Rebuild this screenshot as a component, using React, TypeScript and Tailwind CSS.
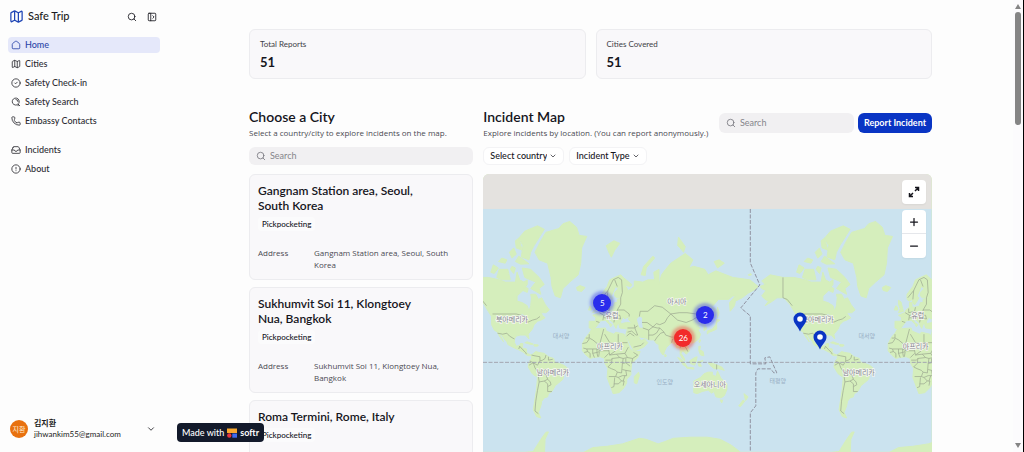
import type { ReactNode } from 'react';
import { ChevronDown, CircleAlert, CircleCheck, Inbox, Map, Minus, PanelLeftOpen, Phone, Plus, Search } from 'lucide-react';

type Point = [number, number];

const TILE = 306;

// Web mercator, with the equator at y = 188 and Greenwich at x = 114
function project([lon, lat]: Point) {
  const x = 114 + (lon * TILE) / 360;
  const y = 188 - (TILE / (2 * Math.PI)) * Math.log(Math.tan(Math.PI / 4 + (lat * Math.PI) / 360));
  return `${x.toFixed(1)} ${y.toFixed(1)}`;
}

const toPath = (points: Point[]) => 'M' + points.map(project).join('L');
const toArea = (points: Point[]) => toPath(points) + 'Z';

const land: Point[][] = [
  // North and Central America
  [[-168, 66], [-162, 67], [-166, 68.5], [-156, 71], [-141, 70], [-128, 70], [-115, 69], [-108, 68], [-96, 68], [-94, 72], [-91, 69], [-86, 68], [-82, 69], [-82, 67], [-87, 64], [-94, 61], [-94, 58], [-88, 57], [-82, 55], [-80, 51], [-78, 55], [-77, 60], [-78, 62], [-72, 62], [-69, 59], [-65, 60], [-61, 56], [-56, 52], [-60, 50], [-66, 50], [-64, 48], [-61, 46], [-66, 44], [-70, 43], [-74, 40], [-76, 36], [-81, 31], [-80, 26], [-82, 28], [-84, 30], [-90, 30], [-95, 29], [-97, 26], [-97, 22], [-95, 18], [-91, 19], [-90, 21], [-87, 21], [-88, 16], [-83, 15], [-83, 11], [-80, 9], [-77, 8], [-80, 7], [-83, 8], [-86, 11], [-92, 14], [-97, 16], [-105, 20], [-106, 23], [-109, 26], [-113, 31], [-115, 31], [-112, 27], [-110, 23], [-115, 29], [-117, 33], [-121, 35], [-124, 40], [-124, 47], [-128, 51], [-133, 56], [-140, 60], [-148, 60], [-153, 58], [-162, 55], [-158, 58], [-162, 59], [-166, 61], [-161, 64], [-166, 65]],
  // South America
  [[-77, 8], [-72, 12], [-68, 11], [-62, 10], [-57, 6], [-51, 4], [-50, 0], [-44, -2], [-39, -4], [-35, -7], [-39, -14], [-40, -20], [-45, -24], [-49, -27], [-53, -33], [-57, -35], [-58, -38], [-62, -39], [-65, -42], [-66, -46], [-69, -51], [-66, -55], [-71, -54], [-75, -49], [-73, -40], [-71, -30], [-70, -18], [-76, -14], [-81, -6], [-80, -1], [-77, 4]],
  // Greenland and the Arctic islands
  [[-73, 78], [-66, 80.5], [-60, 82], [-45, 82.6], [-40, 83.3], [-32, 83.6], [-24, 82.8], [-21, 81.5], [-12, 81.3], [-18, 79], [-19, 75], [-22, 71], [-32, 68], [-40, 65], [-43, 60], [-49, 61], [-53, 66], [-54, 70], [-58, 75], [-68, 76]],
  [[-62, 82.5], [-70, 83], [-85, 82.2], [-92, 81], [-87, 79.5], [-89, 76.8], [-80, 76], [-78, 78], [-74, 79.5]],
  [[-62, 67], [-68, 70], [-78, 73], [-88, 73.5], [-85, 70], [-72, 68], [-78, 65], [-66, 62], [-68, 65]],
  [[-118, 70], [-115, 73], [-105, 73], [-102, 69], [-112, 69]],
  [[-125, 72], [-122, 74.5], [-116, 73.5], [-121, 71.5]],
  [[-80, 74.8], [-92, 77], [-96, 75.5], [-90, 74.7]],
  [[-116, 75.5], [-112, 76.5], [-106, 76], [-108, 75]],
  [[-103, 78], [-98, 79], [-95, 77.5], [-100, 76.5]],
  [[-96, 80.5], [-92, 81], [-88, 78.5], [-95, 79]],
  [[-100, 74], [-96, 73.5], [-98, 71.5], [-102, 73]],
  [[-86, 66], [-81, 65], [-82, 63], [-87, 64]],
  [[-24, 65.5], [-20, 66.4], [-14, 65.5], [-18, 63.5], [-23, 64]],
  [[11, 79.5], [20, 80.5], [27, 80], [21, 78.5], [17, 76.7], [14, 78]],
  [[52, 71], [55, 74], [66, 77], [68, 76.5], [58, 73.5], [57, 70.8]],
  [[95, 79.5], [96, 81.2], [104, 79.3], [102, 78], [98, 79]],
  [[138, 75.5], [144, 76], [150, 75], [142, 73.5]],
  [[178, 71], [181, 71.5], [182, 71], [179, 70.7]],
  // British Isles
  [[-5, 50], [-3, 53], [-5, 56], [-5, 58.5], [-2, 57.5], [0, 53], [1, 51]],
  [[-10, 52], [-8, 55], [-6, 54], [-6, 52]],
  // Caribbean
  [[-85, 22], [-82, 23], [-75, 20.5], [-78, 20]],
  [[-74, 20], [-69, 19.5], [-70, 18], [-74, 18.3]],
  // Europe and Asia
  [[-9, 37], [-9, 43], [-2, 43], [-1, 46], [-5, 48], [2, 50], [4, 52], [8, 54], [8, 57], [11, 57], [11, 54], [14, 54], [19, 54.5], [21, 57], [24, 57], [24, 59], [30, 60], [23, 60], [21, 61], [21, 63], [25, 65], [22, 66], [17, 61], [19, 60], [16, 57], [14, 55.5], [12, 57], [11, 59], [8, 58], [5, 59], [5, 62], [12, 66], [15, 69], [21, 70], [28, 71], [31, 70], [41, 67], [40, 66], [33, 66.5], [37, 64], [41, 65], [44, 66], [44, 68.5], [54, 68], [60, 69], [68, 69], [67, 72], [73, 73], [73, 67], [76, 71], [81, 73], [87, 75], [104, 77.7], [113, 76], [108, 73.5], [114, 74], [127, 73], [131, 71], [140, 72.5], [152, 71], [160, 70], [170, 69.5], [180, 69], [190, 66], [186, 64.5], [178, 62.5], [171, 60], [163, 58], [162, 55], [157, 51], [156, 57], [163, 61], [160, 61], [155, 59], [143, 59], [136, 54.5], [141, 52], [140, 48], [135, 43.5], [131, 43], [128, 40], [129, 36], [126, 34.5], [126, 38], [122, 39.5], [118, 39], [122, 37], [119, 35], [122, 31], [120, 26], [114, 22], [108, 21.5], [106, 19], [109, 13], [107, 10.5], [105, 9], [103, 11], [101, 13], [99, 10], [103, 4], [103.5, 1.5], [101, 3], [98, 9], [98, 14], [97, 17], [94, 16], [92, 21], [88, 22], [82, 17], [80, 13], [78, 8], [76, 10], [73, 16], [73, 20], [70, 21], [67, 25], [61, 25], [57, 27], [51, 28], [48, 30], [50, 27], [52, 24], [56, 26], [60, 22], [55, 17], [45, 13], [43, 13], [39, 21], [35, 28], [34, 31], [36, 36], [31, 36.5], [27, 37], [26, 40], [29, 41], [35, 42], [41, 41.5], [37, 45], [39, 47], [35, 46], [33, 45], [31, 46.5], [28, 43], [28, 41], [24, 40.5], [23, 38], [22.5, 36.5], [20, 40], [19, 42], [14, 45], [12.5, 45], [14, 42], [18, 40], [16, 38], [15, 40], [10, 44], [4, 43.5], [3, 42], [0, 39], [-2, 37], [-5, 36]],
  // Africa and Madagascar
  [[-6, 36], [10, 37], [11, 34], [20, 31], [22, 33], [32, 31], [34, 28], [37, 21], [39, 15], [43, 12], [51, 12], [48, 5], [41, -2], [40, -10], [40, -15], [35, -20], [35, -24], [32, -29], [26, -34], [19, -35], [17, -30], [12, -18], [13, -8], [9, -1], [9, 4], [4, 6], [-4, 5], [-8, 4], [-13, 8], [-17, 13], [-17, 21], [-13, 28], [-9, 32]],
  [[44, -17], [49, -12], [50, -16], [47, -25], [44, -24]],
  // Sri Lanka, Japan, Taiwan, Philippines
  [[80, 9], [82, 7], [80, 6]],
  [[130, 31], [130, 34], [136, 36], [140, 40], [141, 45], [145, 44], [141, 42], [141, 36], [136, 34], [132, 33]],
  [[142, 46], [142, 54], [144, 50]],
  [[120, 23], [121, 25], [122, 25], [121, 22]],
  [[120, 18], [122, 18], [121, 14], [125, 12], [126, 7], [122, 8], [120, 13]],
  // Indonesia and New Guinea
  [[95, 5], [98, 4], [104, -2], [106, -6], [102, -4]],
  [[105, -6], [114, -7], [114, -8.5], [106, -7.5]],
  [[109, 1], [115, 5], [118, 6], [117, 1], [115, -4], [110, -2]],
  [[119, 0], [125, 1.5], [121, -1], [123, -5], [120, -5]],
  [[131, -1], [137, -2], [147, -6], [150, -10], [143, -8], [138, -8], [133, -4]],
  // Australia and New Zealand
  [[114, -22], [114, -34], [118, -35], [124, -33], [131, -31.5], [135, -34.5], [138, -33], [140, -38], [146, -39], [150, -37], [153, -31], [153, -25], [146, -19], [142, -11], [140, -17], [136, -15], [136, -12], [131, -12], [126, -14], [122, -18]],
  [[145, -41], [148, -41], [147, -43.5]],
  [[173, -35], [178, -38], [175, -41.5], [174, -38]],
  [[172, -41], [174, -42], [169, -46.5], [167, -46]],
  // Antarctica
  [[-180, -78], [-150, -76], [-100, -73], [-75, -72], [-66, -67], [-60, -63.5], [-57, -63.3], [-61, -67], [-62, -74], [-40, -78], [-20, -73], [-5, -70.5], [12, -70], [30, -69], [50, -66.5], [58, -67], [72, -69], [80, -68], [90, -66.5], [110, -66], [130, -66], [145, -67], [158, -69.5], [168, -72], [170, -77], [180, -78], [180, -84], [-180, -84]],
];

const lakes: Point[][] = [
  [[50, 47], [53, 46], [53, 42], [54, 37], [50, 37.5], [48, 42], [47, 45]],
  [[-92, 47], [-88, 49], [-84, 47], [-80, 45], [-84, 46]],
  [[-87, 46], [-85, 45], [-87, 42]],
  [[32, 0], [34, 0], [33, -2]],
];

const borders: Point[][] = [
  [[-141, 70], [-141, 60], [-136, 59], [-130, 55]],
  [[-123, 49], [-95, 49], [-89, 48], [-83, 46], [-82, 42], [-76, 44], [-71, 45], [-67, 47]],
  [[-117, 32], [-111, 31], [-106, 32], [-103, 29], [-99, 27], [-97, 26]],
  [[-92, 15], [-91, 18], [-89, 16], [-87, 14], [-84, 11], [-83, 9]],
  // South America
  [[-77, 8], [-73, 7], [-67, 6], [-67, 1], [-70, -4], [-75, -1], [-79, 1]],
  [[-60, 8], [-61, 4], [-64, 2], [-67, 1]],
  [[-57, 6], [-57, 2], [-52, 3]],
  [[-80, -4], [-75, -1], [-73, -7], [-70, -11], [-65, -11], [-60, -15], [-58, -20], [-62, -22], [-68, -23], [-69, -17], [-70, -11]],
  [[-68, -23], [-70, -32], [-72, -42], [-73, -50], [-69, -52]],
  [[-62, -22], [-58, -25], [-58, -28], [-54, -26], [-55, -23], [-58, -20]],
  [[-58, -28], [-58, -33], [-53, -33]],
  // Europe
  [[6, 60], [13, 64], [19, 69], [25, 70], [29, 69], [30, 63], [28, 60]],
  [[12, 59], [13, 64]],
  [[24, 66], [21, 69]],
  [[3, 50], [8, 48], [7, 44]],
  [[8, 48], [16, 48], [23, 48], [24, 52], [28, 56], [28, 60]],
  [[7, 53], [7, 50], [14, 51], [15, 54]],
  [[14, 51], [18, 49], [17, 46], [13, 46], [8, 46]],
  [[20, 42], [21, 46], [28, 45], [27, 48], [23, 48]],
  [[24, 52], [32, 52], [38, 49], [38, 47]],
  [[-1, 43], [3, 42]],
  // Middle East and Asia
  [[36, 37], [44, 37], [48, 39]],
  [[36, 33], [41, 34], [46, 30], [48, 30]],
  [[35, 29], [39, 32], [44, 29]],
  [[44, 40], [45, 36], [48, 30]],
  [[43, 17], [52, 19], [55, 22]],
  [[61, 25], [61, 31], [61, 35], [54, 37]],
  [[61, 35], [66, 38], [71, 37], [74, 37], [70, 32], [66, 30], [61, 30]],
  [[53, 42], [59, 42], [66, 38], [70, 41], [74, 40], [80, 42], [83, 46], [87, 49]],
  [[50, 47], [51, 51], [60, 51], [68, 55], [77, 54], [87, 49], [97, 50], [106, 50], [117, 49], [119, 53], [127, 50], [131, 47], [131, 43]],
  [[87, 49], [95, 44], [105, 42], [112, 44], [119, 47], [117, 49]],
  [[74, 37], [79, 33], [81, 30], [88, 28], [97, 28], [99, 22], [105, 23], [108, 21]],
  [[68, 24], [71, 28], [75, 32], [79, 33]],
  [[92, 22], [92, 26], [89, 26], [88, 22]],
  [[98, 16], [99, 22], [101, 20], [105, 16], [107, 12]],
  [[141, -3], [141, -9]],
  // Africa
  [[-9, 31], [-9, 27], [-5, 25], [3, 19], [8, 36]],
  [[-13, 27], [-9, 27]],
  [[-16, 16], [-12, 15], [-5, 15], [0, 15], [4, 13], [14, 13], [15, 22], [9, 31]],
  [[-17, 21], [-12, 22], [-9, 26]],
  [[-12, 15], [-11, 12], [-8, 10], [-8, 5]],
  [[-15, 11], [-11, 12]],
  [[-5, 15], [-5, 10], [-3, 5]],
  [[0, 15], [0, 11], [1, 6]],
  [[-5, 10], [0, 11], [3, 12], [2, 6]],
  [[3, 19], [4, 13]],
  [[15, 22], [25, 20], [25, 31]],
  [[25, 22], [36, 22]],
  [[24, 20], [22, 13], [15, 8], [14, 13]],
  [[9, 5], [14, 10]],
  [[15, 8], [23, 9], [27, 5], [18, 4], [16, 2], [10, 2]],
  [[23, 9], [33, 10], [37, 17]],
  [[33, 10], [36, 5], [42, 4], [48, 8], [43, 11]],
  [[27, 5], [31, 4], [36, 5]],
  [[31, 4], [30, -2], [34, -1], [39, -5]],
  [[34, -1], [34, 4]],
  [[42, 4], [41, -2]],
  [[18, 4], [17, -2], [13, -6], [17, -8], [22, -10], [24, -12], [29, -13], [30, -2]],
  [[24, -12], [22, -17], [14, -17]],
  [[30, -9], [34, -10], [40, -11]],
  [[34, -10], [35, -16], [30, -16], [25, -18], [22, -17]],
  [[21, -18], [20, -28], [17, -29]],
  [[20, -25], [25, -25], [29, -22], [32, -22], [31, -27]],
  [[29, -22], [25, -18]],
  [[31, -22], [33, -16]],
];

function WorldMap() {
  return (
    <svg viewBox="0 0 449 278" className="w-full" role="img" aria-label="World map">
      <defs>
        <g id="world" strokeLinejoin="round">
          <path d={land.map(toArea).join('')} fill="#d5eebc" stroke="#d5eebc" strokeWidth="1" />
          <path d={lakes.map(toArea).join('')} fill="#cbe3ef" />
          <path d={borders.map(toPath).join('')} fill="none" stroke="#9ba68f" strokeWidth="0.7" />
        </g>
      </defs>
      <rect width="449" height="36" fill="#e4e2df" />
      <rect y="35" width="449" height="243" fill="#cbe3ef" />
      <use href="#world" />
      <use href="#world" x={TILE} />
      <path d="M0 188.500H449" stroke="#a3a5b0" strokeWidth="1" strokeDasharray="4 1.500" />
      <path
        d="M267.500 35V89L277 111L258 134L267.500 142V190H283L282 184L287 183L294 199H291L288 195H275L273 199V232L267.500 239V278"
        fill="none"
        stroke="#9092a0"
        strokeWidth="1"
        strokeDasharray="4 1.500"
      />
      <g
        fontFamily='"Noto Sans CJK KR", sans-serif'
        fontSize="7"
        textAnchor="middle"
        fill="#83838b"
        stroke="#f7f8f3"
        strokeWidth="1.500"
        paintOrder="stroke"
      >
        <text x="29" y="148">북아메리카</text>
        <text x="335" y="148">북아메리카</text>
        <text x="70" y="201">남아메리카</text>
        <text x="376" y="201">남아메리카</text>
        <text x="127" y="175">아프리카</text>
        <text x="433" y="175">아프리카</text>
        <text x="129" y="144">유럽</text>
        <text x="435" y="144">유럽</text>
        <text x="194" y="130">아시아</text>
        <text x="227" y="213">오세아니아</text>
      </g>
      <g fontFamily='"Noto Sans CJK KR", sans-serif' fontSize="6" textAnchor="middle" fill="#98afc4">
        <text x="78" y="164">대서양</text>
        <text x="384" y="164">대서양</text>
        <text x="182" y="210">인도양</text>
        <text x="295" y="209">태평양</text>
      </g>
    </svg>
  );
}

function HomeIcon() {
  return (
    <svg viewBox="0 0 24 24" className="size-2.5" fill="none" stroke="currentColor" strokeWidth="2" strokeLinejoin="round">
      <path d="M3 10.500a3 3 0 0 1 1.200-2.400l6-4.700a3 3 0 0 1 3.600 0l6 4.700a3 3 0 0 1 1.200 2.400V19a2 2 0 0 1-2 2H5a2 2 0 0 1-2-2Z" />
    </svg>
  );
}

function SafetySearchIcon() {
  return (
    <svg viewBox="0 0 24 24" className="size-2.5" fill="none" stroke="currentColor" strokeWidth="2" strokeLinecap="round">
      <path d="M19 15a8.500 8.500 0 1 0-4.500 4M17 17l4 4" />
      <path d="M12 6a5 5 0 0 1 5 5M17 17v4" />
    </svg>
  );
}

function ExpandIcon() {
  return (
    <svg viewBox="0 0 12 12" className="size-3" fill="none" stroke="currentColor" strokeWidth="1.500">
      <path d="M7 1.500h3.500V5M10.500 1.500L7 5M5 10.500H1.500V7M1.500 10.500L5 7" />
    </svg>
  );
}

const mainLinks = [
  { label: 'Home', icon: <HomeIcon />, active: true },
  { label: 'Cities', icon: <Map className="size-2.5" /> },
  { label: 'Safety Check-in', icon: <CircleCheck className="size-2.5" /> },
  { label: 'Safety Search', icon: <SafetySearchIcon /> },
  { label: 'Embassy Contacts', icon: <Phone className="size-2.5" /> },
];

const moreLinks = [
  { label: 'Incidents', icon: <Inbox className="size-2.5" /> },
  { label: 'About', icon: <CircleAlert className="size-2.5" /> },
];

const cities = [
  { name: 'Gangnam Station area, Seoul, South Korea', type: 'Pickpocketing' },
  { name: 'Sukhumvit Soi 11, Klongtoey Nua, Bangkok', type: 'Pickpocketing' },
  { name: 'Roma Termini, Rome, Italy', type: 'Pickpocketing' },
];

function NavLink({ label, icon, active }: { label: string; icon: ReactNode; active?: boolean }) {
  return (
    <a
      href="#"
      className={`flex h-4 items-center gap-1 rounded-sm pl-[3px] text-[9px] font-medium ${active ? 'bg-[#e5e8fa] text-[#2b46a8]' : 'text-[#2c2c33]'}`}
    >
      {icon}
      {label}
    </a>
  );
}

function Sidebar() {
  return (
    <aside className="flex w-[168px] shrink-0 flex-col px-2">
      <div className="flex h-[37px] items-center gap-1 pr-[3px] pb-1 pl-px">
        <Map className="size-[15px] text-[#1f45b5]" />
        <span className="flex-1 text-[11px] font-medium text-[#1c1c22]">Safe Trip</span>
        <button aria-label="Search" className="mr-1.5">
          <Search className="size-2.5" />
        </button>
        <button aria-label="Toggle sidebar">
          <PanelLeftOpen className="size-2.5" />
        </button>
      </div>
      <nav className="flex flex-col gap-[3px]">
        {mainLinks.map(link => <NavLink key={link.label} {...link} />)}
      </nav>
      <nav className="mt-[13px] flex flex-col gap-[3px]">
        {moreLinks.map(link => <NavLink key={link.label} {...link} />)}
      </nav>
      <button className="mt-auto mb-3 flex items-center gap-1.5 pr-1 pl-0.5 text-left text-[#1c1c22]">
        <span className="flex size-[18px] items-center justify-center rounded-full bg-[#e8710f] text-[7px] text-orange-100">지환</span>
        <span className="flex-1 text-[8px] leading-[11px]">
          <span className="block font-bold">김지환</span>
          <span className="block">jihwankim55@gmail.com</span>
        </span>
        <ChevronDown className="size-2.5" />
      </button>
    </aside>
  );
}

function StatCard({ label, value }: { label: string; value: number }) {
  return (
    <div className="flex-1 rounded-md border border-[#ececef] bg-[#f9f8fa] px-2.5 py-2">
      <p className="text-[8px] leading-3 text-[#3d3d45]">{label}</p>
      <p className="mt-1 text-[13px] leading-4 font-bold">{value}</p>
    </div>
  );
}

function SectionTitle({ title, text }: { title: string; text: string }) {
  return (
    <div className="flex-1">
      <h2 className="text-[14px] leading-5 font-semibold">{title}</h2>
      <p className="font-['Open_Sans',sans-serif] text-[8px] leading-3 whitespace-nowrap text-[#4a4a52]">{text}</p>
    </div>
  );
}

function SearchBox({ label, className }: { label: string; className: string }) {
  return (
    <label className={`flex items-center gap-1 rounded-md bg-[#f1f0f2] px-[7px] text-[#77777e] ${className}`}>
      <Search className="size-2.5 shrink-0" />
      <input type="search" aria-label={label} placeholder="Search" className="w-full min-w-0 bg-transparent text-[9px] outline-none placeholder:text-[#85858b]" />
    </label>
  );
}

function Filter({ label }: { label: string }) {
  return (
    <div className="relative flex h-[18px] items-center rounded-md border border-[#f3f3f5] bg-white">
      <select aria-label={label} className="h-full appearance-none bg-transparent pr-4 pl-1.5 text-[9px] font-medium outline-none">
        <option>{label}</option>
      </select>
      <ChevronDown className="pointer-events-none absolute right-1.5 size-2" />
    </div>
  );
}

function CityCard({ name, type }: { name: string; type: string }) {
  return (
    <article className="rounded-md border border-[#ececef] bg-[#f9f8fa] p-2">
      <h3 className="pr-9 text-[12px] leading-[15px] font-semibold">{name}</h3>
      <span className="mt-1 flex h-3.5 w-fit items-center rounded-sm bg-[#fbfbfc] px-1 text-[8px] font-medium">{type}</span>
      <dl className="mt-4 flex font-['Open_Sans',sans-serif] text-[8px] leading-3 text-[#4a4a52]">
        <dt className="w-14 shrink-0">Address</dt>
        <dd className="pr-2">{name}</dd>
      </dl>
    </article>
  );
}

function Cluster({ count, className }: { count: number; className: string }) {
  return (
    <button className={`absolute flex size-[18px] items-center justify-center rounded-full text-[8px] text-white shadow-[0_0_3px_3px] ${className}`}>
      <span className="text-white">{count}</span>
    </button>
  );
}

function Pin({ className }: { className: string }) {
  return (
    <button aria-label="Incident" className={`absolute ${className}`}>
      <svg viewBox="0 0 14 20" className="h-5 w-3.5">
        <path d="M7 0.500A6.500 6.500 0 0 0 0.500 7C0.500 11.500 5 14.500 7 19.500C9 14.500 13.500 11.500 13.500 7A6.500 6.500 0 0 0 7 0.500Z" fill="#0a35c4" />
        <circle cx="7" cy="7" r="2.800" fill="#fff" />
      </svg>
    </button>
  );
}

function IncidentMap() {
  return (
    <div className="relative flex-1 overflow-hidden rounded-t-md bg-[#d5eebc]">
      <WorldMap />
      <Cluster count={5} className="top-[120px] left-[110px] bg-[#2a2cec] shadow-[#2a2cec]/40" />
      <Cluster count={2} className="top-[132px] left-[213px] bg-[#2a2cec] shadow-[#2a2cec]/40" />
      <Cluster count={26} className="top-[155px] left-[191px] bg-[#f22b2b] shadow-[#f22b2b]/40" />
      <Pin className="top-[138px] left-[310px]" />
      <Pin className="top-[156px] left-[330px]" />
      <div className="absolute top-1.5 right-1.5 flex w-6 flex-col gap-1.5">
        <button aria-label="Full screen" className="flex h-6 items-center justify-center rounded bg-white shadow-xs">
          <ExpandIcon />
        </button>
        <div className="flex flex-col divide-y divide-gray-200 rounded bg-white shadow-xs">
          <button aria-label="Zoom in" className="flex h-6 items-center justify-center"><Plus className="size-3" strokeWidth={2.5} /></button>
          <button aria-label="Zoom out" className="flex h-6 items-center justify-center"><Minus className="size-3" strokeWidth={2.5} /></button>
        </div>
      </div>
    </div>
  );
}

function Scrollbar() {
  return (
    <div aria-hidden="true" className="flex w-[11px] shrink-0 flex-col items-center border-r border-black bg-[#fcfbfd] py-1">
      <svg viewBox="0 0 6 5" className="h-[5px] w-1.5"><path d="M3 0L6 5H0Z" fill="#858585" /></svg>
      <div className="mt-[3px] h-[113px] w-1.5 rounded-full bg-[#858585]" />
      <svg viewBox="0 0 6 5" className="mt-auto h-[5px] w-1.5"><path d="M3 5L6 0H0Z" fill="#858585" /></svg>
    </div>
  );
}

export default function App() {
  return (
    <div className="relative flex h-screen overflow-hidden bg-[#fdfdfd] font-['Lato','Noto_Sans_CJK_KR',sans-serif] text-[#15151c]">
      <Sidebar />
      <main className="min-w-0 flex-1 overflow-hidden">
        <div className="mx-auto flex h-full max-w-[683px] flex-col pt-[29px]">
          <div className="flex shrink-0 gap-2.5">
            <StatCard label="Total Reports" value={51} />
            <StatCard label="Cities Covered" value={51} />
          </div>
          <div className="mt-7 grid min-h-0 flex-1 grid-cols-[1fr_2fr] gap-2.5">
            <section>
              <SectionTitle title="Choose a City" text="Select a country/city to explore incidents on the map." />
              <SearchBox label="Search cities" className="mt-2 h-[18px]" />
              <div className="mt-[9px] flex flex-col gap-[7px]">
                {cities.map(city => <CityCard key={city.name} {...city} />)}
              </div>
            </section>
            <section className="flex flex-col">
              <div className="flex items-center gap-1">
                <SectionTitle title="Incident Map" text="Explore incidents by location. (You can report anonymously.)" />
                <SearchBox label="Search incidents" className="h-5 w-[135px]" />
                <button className="h-5 rounded-md bg-[#0a35c4] px-1.5 text-[9px] font-bold text-white">Report Incident</button>
              </div>
              <div className="mt-2 mb-[9px] flex gap-[5px]">
                <Filter label="Select country" />
                <Filter label="Incident Type" />
              </div>
              <IncidentMap />
            </section>
          </div>
        </div>
      </main>
      <Scrollbar />
      <a href="#" className="absolute bottom-2.5 left-[177px] flex h-[19px] items-center gap-[3px] rounded bg-[#131a2b] px-[5px] text-[9px] font-medium text-white">
        Made with
        <svg viewBox="0 0 10 10" className="size-2.5">
          <path d="M0 0.500H10V5H0Z" fill="#f9a82f" />
          <circle cx="2.300" cy="7.500" r="2.200" fill="#e5343d" />
          <path d="M5.300 5.500H10V9.700H5.300Z" fill="#3d6bf0" />
        </svg>
        <span className="font-bold">softr</span>
      </a>
    </div>
  );
}
